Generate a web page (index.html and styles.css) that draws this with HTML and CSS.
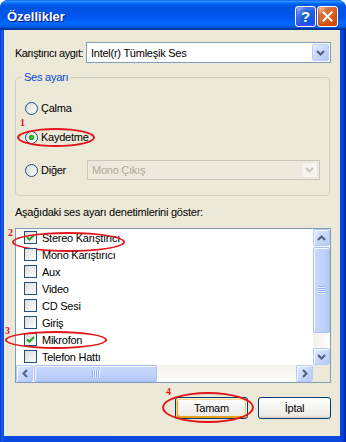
FILE: index.html
```html
<!DOCTYPE html>
<html lang="tr">
<head>
<meta charset="utf-8">
<title>Özellikler</title>
<link rel="stylesheet" href="styles.css">
</head>
<body>
<div class="window">
  <div class="titlebar">
    <span class="title">Özellikler</span>
    <div class="tb-buttons">
      <span class="tb-btn help">?</span>
      <span class="tb-btn close"><svg width="13" height="13" viewBox="0 0 13 13"><path d="M2.5 2.5 L10.5 10.5 M10.5 2.5 L2.5 10.5" stroke="#fff" stroke-width="2" stroke-linecap="square"/></svg></span>
    </div>
  </div>
  <div class="client">
    <div class="mixer-row">
      <span class="mixer-label">Karıştırıcı aygıt:</span>
      <div class="combo">
        <span class="combo-text">Intel(r) Tümleşik Ses</span>
        <span class="dd"><svg width="9" height="6" viewBox="0 0 9 6"><path d="M1 1 L4.5 4.5 L8 1" fill="none" stroke="#4D6185" stroke-width="2"/></svg></span>
      </div>
    </div>

    <fieldset class="group">
      <legend>Ses ayarı</legend>
      <div class="opt opt-play"><span class="radio"></span><span class="opt-text">Çalma</span></div>
      <div class="opt opt-rec">
        <span class="radio on"></span><span class="opt-text">Kaydetme</span>
        <span class="mark m1"></span><span class="num n1">1</span>
      </div>
      <div class="opt opt-other">
        <span class="opt-lead"><span class="radio"></span><span class="opt-text">Diğer</span></span>
        <div class="combo disabled">
          <span class="combo-text">Mono Çıkış</span>
          <span class="dd"><svg width="9" height="6" viewBox="0 0 9 6"><path d="M1 1 L4.5 4.5 L8 1" fill="none" stroke="#C9C7BA" stroke-width="2"/></svg></span>
        </div>
      </div>
    </fieldset>

    <div class="show-label">Aşağıdaki ses ayarı denetimlerini göster:</div>

    <div class="listbox">
      <ul class="items">
        <li class="item"><span class="check on"><svg width="9" height="9" viewBox="0 0 9 9"><path d="M1 4.2 L3.4 6.6 L8 2" fill="none" stroke="#21A121" stroke-width="2"/></svg></span><span>Stereo Karıştırıcı</span><span class="mark m2"></span><span class="num n2">2</span></li>
        <li class="item"><span class="check"></span><span>Mono Karıştırıcı</span></li>
        <li class="item"><span class="check"></span><span>Aux</span></li>
        <li class="item"><span class="check"></span><span>Video</span></li>
        <li class="item"><span class="check"></span><span>CD Sesi</span></li>
        <li class="item"><span class="check"></span><span>Giriş</span></li>
        <li class="item"><span class="check on"><svg width="9" height="9" viewBox="0 0 9 9"><path d="M1 4.2 L3.4 6.6 L8 2" fill="none" stroke="#21A121" stroke-width="2"/></svg></span><span>Mikrofon</span><span class="mark m3"></span><span class="num n3">3</span></li>
        <li class="item"><span class="check"></span><span>Telefon Hattı</span></li>
      </ul>
      <div class="vscroll">
        <span class="sb-btn"><svg width="9" height="6" viewBox="0 0 9 6"><path d="M1 5 L4.5 1.5 L8 5" fill="none" stroke="#4D6185" stroke-width="2"/></svg></span>
        <span class="thumb thumb-v"><svg width="7" height="8" viewBox="0 0 7 8"><path d="M0 0.5h7M0 2.5h7M0 4.5h7M0 6.5h7" stroke="#8CB0F8" stroke-width="1"/><path d="M0 1.5h7M0 3.5h7M0 5.5h7M0 7.5h7" stroke="#EEF4FE" stroke-width="1"/></svg></span>
        <span class="track"></span>
        <span class="sb-btn"><svg width="9" height="6" viewBox="0 0 9 6"><path d="M1 1 L4.5 4.5 L8 1" fill="none" stroke="#4D6185" stroke-width="2"/></svg></span>
      </div>
      <div class="hscroll">
        <span class="sb-btn"><svg width="6" height="9" viewBox="0 0 6 9"><path d="M5 1 L1.5 4.5 L5 8" fill="none" stroke="#4D6185" stroke-width="2"/></svg></span>
        <span class="thumb thumb-h"><svg width="8" height="7" viewBox="0 0 8 7"><path d="M0.5 0v7M2.5 0v7M4.5 0v7M6.5 0v7" stroke="#8CB0F8" stroke-width="1"/><path d="M1.5 0v7M3.5 0v7M5.5 0v7M7.5 0v7" stroke="#EEF4FE" stroke-width="1"/></svg></span>
        <span class="track"></span>
        <span class="sb-btn"><svg width="6" height="9" viewBox="0 0 6 9"><path d="M1 1 L4.5 4.5 L1 8" fill="none" stroke="#4D6185" stroke-width="2"/></svg></span>
      </div>
      <div class="corner"></div>
    </div>

    <div class="buttons">
      <div class="btn-wrap">
        <button class="btn default" type="button">Tamam</button>
        <span class="mark m4"></span><span class="num n4">4</span>
      </div>
      <button class="btn" type="button">İptal</button>
    </div>
  </div>
</div>
</body>
</html>
```
FILE: styles.css
```css
* { box-sizing: border-box; }
html, body { margin: 0; padding: 0; }
body {
  width: 346px;
  height: 442px;
  background: #ffffff;
  font-family: "Liberation Sans", Arial, sans-serif;
  font-size: 11px;
  letter-spacing: -0.25px;
  color: #000;
}
.window {
  width: 346px;
  height: 442px;
  display: flex;
  flex-direction: column;
  background: linear-gradient(90deg, #0831D9 0, #1660E8 2px, #0A4AE0 4px, #0A47DC 340px, #0840D2 343px, #001EA8 346px);
  border-radius: 8px 8px 0 0;
  overflow: hidden;
}
.titlebar {
  height: 30px;
  flex: none;
  display: flex;
  align-items: center;
  justify-content: space-between;
  padding: 2px 8px 0 7px;
  background: linear-gradient(180deg, #0058EE 0%, #3593FF 4%, #288EFF 6%, #127DFF 8%, #036FFC 10%, #0262EE 14%, #0057E5 20%, #0054E3 24%, #0055EB 56%, #005BF5 66%, #026AFE 76%, #0062EF 86%, #0052D6 92%, #0040AB 94%, #003092 100%);
}
.title {
  color: #fff;
  font: bold 13px "Liberation Sans", Arial, sans-serif;
  letter-spacing: 0;
  text-shadow: 1px 1px 0 #0A1883;
}
.tb-buttons { display: flex; gap: 1px; }
.tb-btn {
  width: 21px;
  height: 21px;
  border: 1px solid #fff;
  border-radius: 3px;
  display: flex;
  align-items: center;
  justify-content: center;
}
.help {
  background: radial-gradient(circle at 90% 90%, #0054E9 0%, #2263D5 55%, #4479E4 70%, #A3BBEC 90%, #fff 100%);
  box-shadow: inset 0 -1px 2px 1px #4646FF;
  color: #fff;
  font: bold 15px "Liberation Sans", Arial, sans-serif;
  letter-spacing: 0;
  line-height: 1;
}
.close {
  background: radial-gradient(circle at 90% 90%, #CC4600 0%, #DC6527 55%, #CD7546 70%, #FFCCB2 90%, #fff 100%);
  box-shadow: inset 0 -1px 2px 1px #DA4600;
}
.client {
  flex: 1;
  margin: 0 6px 6px 4px;
  background: #ECE9D8;
  padding: 12px 9px 0 11px;
  display: flex;
  flex-direction: column;
}
.mixer-row {
  display: flex;
  align-items: center;
  height: 21px;
}
.mixer-label { width: 71px; flex: none; white-space: nowrap; letter-spacing: -0.5px; }
.combo {
  flex: 1;
  display: flex;
  align-items: center;
  height: 21px;
  border: 1px solid #7F9DB9;
  background: #fff;
  padding: 1px 1px 1px 4px;
}
.combo-text { flex: 1; white-space: nowrap; }
.dd {
  width: 17px;
  height: 17px;
  flex: none;
  border: 1px solid #BBCDF4;
  border-radius: 2px;
  background: linear-gradient(135deg, #E6EEFE 0%, #C6D6FC 55%, #B4C9F6 100%);
  display: flex;
  align-items: center;
  justify-content: center;
}
.combo.disabled {
  border-color: #C9C7BA;
  background: #EDEADD;
  color: #ACA899;
  height: 20px;
}
.combo.disabled .dd {
  height: 16px;
  border-color: #E8E6DD;
  background: #F5F4EF;
}
.group {
  margin: 8px 0 0 0;
  width: 315px;
  padding: 17px 0 15px 0;
  border: 1px solid #D0D0BF;
  border-radius: 4px;
}
.group legend {
  margin-left: 6px;
  padding: 0 2px;
  line-height: 12px;
  color: #0046D5;
}
.opt {
  position: relative;
  display: flex;
  align-items: center;
  margin-left: 9px;
  height: 16px;
}
.opt-rec { margin-top: 13px; }
.opt-other { margin-top: 15px; height: 20px; width: 295px; }
.opt-lead { display: flex; align-items: center; width: 62px; flex: none; }
.opt-text { margin-left: 3px; white-space: nowrap; }
.radio {
  width: 13px;
  height: 13px;
  flex: none;
  border-radius: 50%;
  border: 1px solid #1D5281;
  background: linear-gradient(135deg, #DCDCD7, #FFFFFF);
}
.radio.on {
  background: radial-gradient(circle, #4CC94C 0, #21A121 2.2px, rgba(33,161,33,0) 3.2px), linear-gradient(135deg, #DCDCD7, #FFFFFF);
}
.show-label {
  margin-top: 10px;
  line-height: 13px;
  white-space: nowrap;
}
.listbox {
  margin-top: 9px;
  width: 316px;
  height: 155px;
  border: 1px solid #7F9DB9;
  background: #fff;
  display: grid;
  grid-template-columns: 297px 17px;
  grid-template-rows: 136px 17px;
}
.items {
  list-style: none;
  margin: 0;
  padding: 0;
}
.item {
  position: relative;
  display: flex;
  align-items: center;
  height: 17px;
  padding-left: 8px;
  gap: 5px;
  white-space: nowrap;
}
.check {
  width: 13px;
  height: 13px;
  flex: none;
  border: 1px solid #1D5281;
  background: linear-gradient(135deg, #DCDCD7, #FFFFFF);
  display: flex;
  align-items: center;
  justify-content: center;
}
.vscroll {
  display: flex;
  flex-direction: column;
  background: linear-gradient(90deg, #F3F1EC, #FEFEFB);
}
.hscroll {
  display: flex;
  background: linear-gradient(180deg, #F3F1EC, #FEFEFB);
}
.sb-btn {
  width: 17px;
  height: 17px;
  flex: none;
  border: 1px solid #B7CBF5;
  border-radius: 2px;
  background: linear-gradient(135deg, #E3EBFE 0%, #C6D6FC 55%, #B6CAF7 100%);
  box-shadow: inset 1px 1px 0 #F4F8FF;
  display: flex;
  align-items: center;
  justify-content: center;
}
.thumb {
  flex: none;
  border: 1px solid #A8C0F2;
  border-radius: 2px;
  display: flex;
  align-items: center;
  justify-content: center;
  box-shadow: inset 1px 1px 0 #F4F8FF;
}
.thumb-v {
  height: 86px;
  margin-top: 1px;
  background: linear-gradient(90deg, #C9D8FC, #BFD2FB 60%, #B3C8F5);
}
.thumb-h {
  width: 123px;
  margin-left: 1px;
  background: linear-gradient(180deg, #C9D8FC, #BFD2FB 60%, #B3C8F5);
}
.track { flex: 1; }
.corner { background: #ECE9D8; }
.buttons {
  margin-top: 14px;
  display: flex;
  justify-content: flex-end;
  gap: 10px;
}
.btn-wrap { position: relative; display: flex; }
.btn {
  width: 73px;
  height: 22px;
  padding: 0;
  border: 1px solid #003C74;
  border-radius: 3px;
  background: linear-gradient(180deg, #FFFFFF, #ECEBE6 86%, #D6D0C5);
  font-family: "Liberation Sans", Arial, sans-serif;
  font-size: 11px;
  letter-spacing: -0.25px;
  color: #000;
}
.btn.default {
  box-shadow: inset -1px 1px #FFF0CF, inset 1px 2px #FDD889, inset -2px 2px #FBC761, inset 2px -2px #E5A01A;
}
.mark {
  position: absolute;
  border: 2px solid #E3141B;
  border-radius: 50%;
  pointer-events: none;
}
.num {
  position: absolute;
  color: #E3141B;
  font: bold 10px/10px "Liberation Serif", "Times New Roman", serif;
  letter-spacing: 0;
}
.m1 { left: -8px; top: -1px; width: 78px; height: 19px; }
.n1 { left: -5px; top: -11px; }
.m2 { left: -4px; top: 3px; width: 113px; height: 20px; }
.n2 { left: -8px; top: -1px; }
.m3 { left: -11px; top: 0; width: 102px; height: 18px; }
.n3 { left: -11px; top: -5px; }
.m4 { left: -13px; top: -5px; width: 92px; height: 31px; }
.n4 { left: -9px; top: -10px; }
```
